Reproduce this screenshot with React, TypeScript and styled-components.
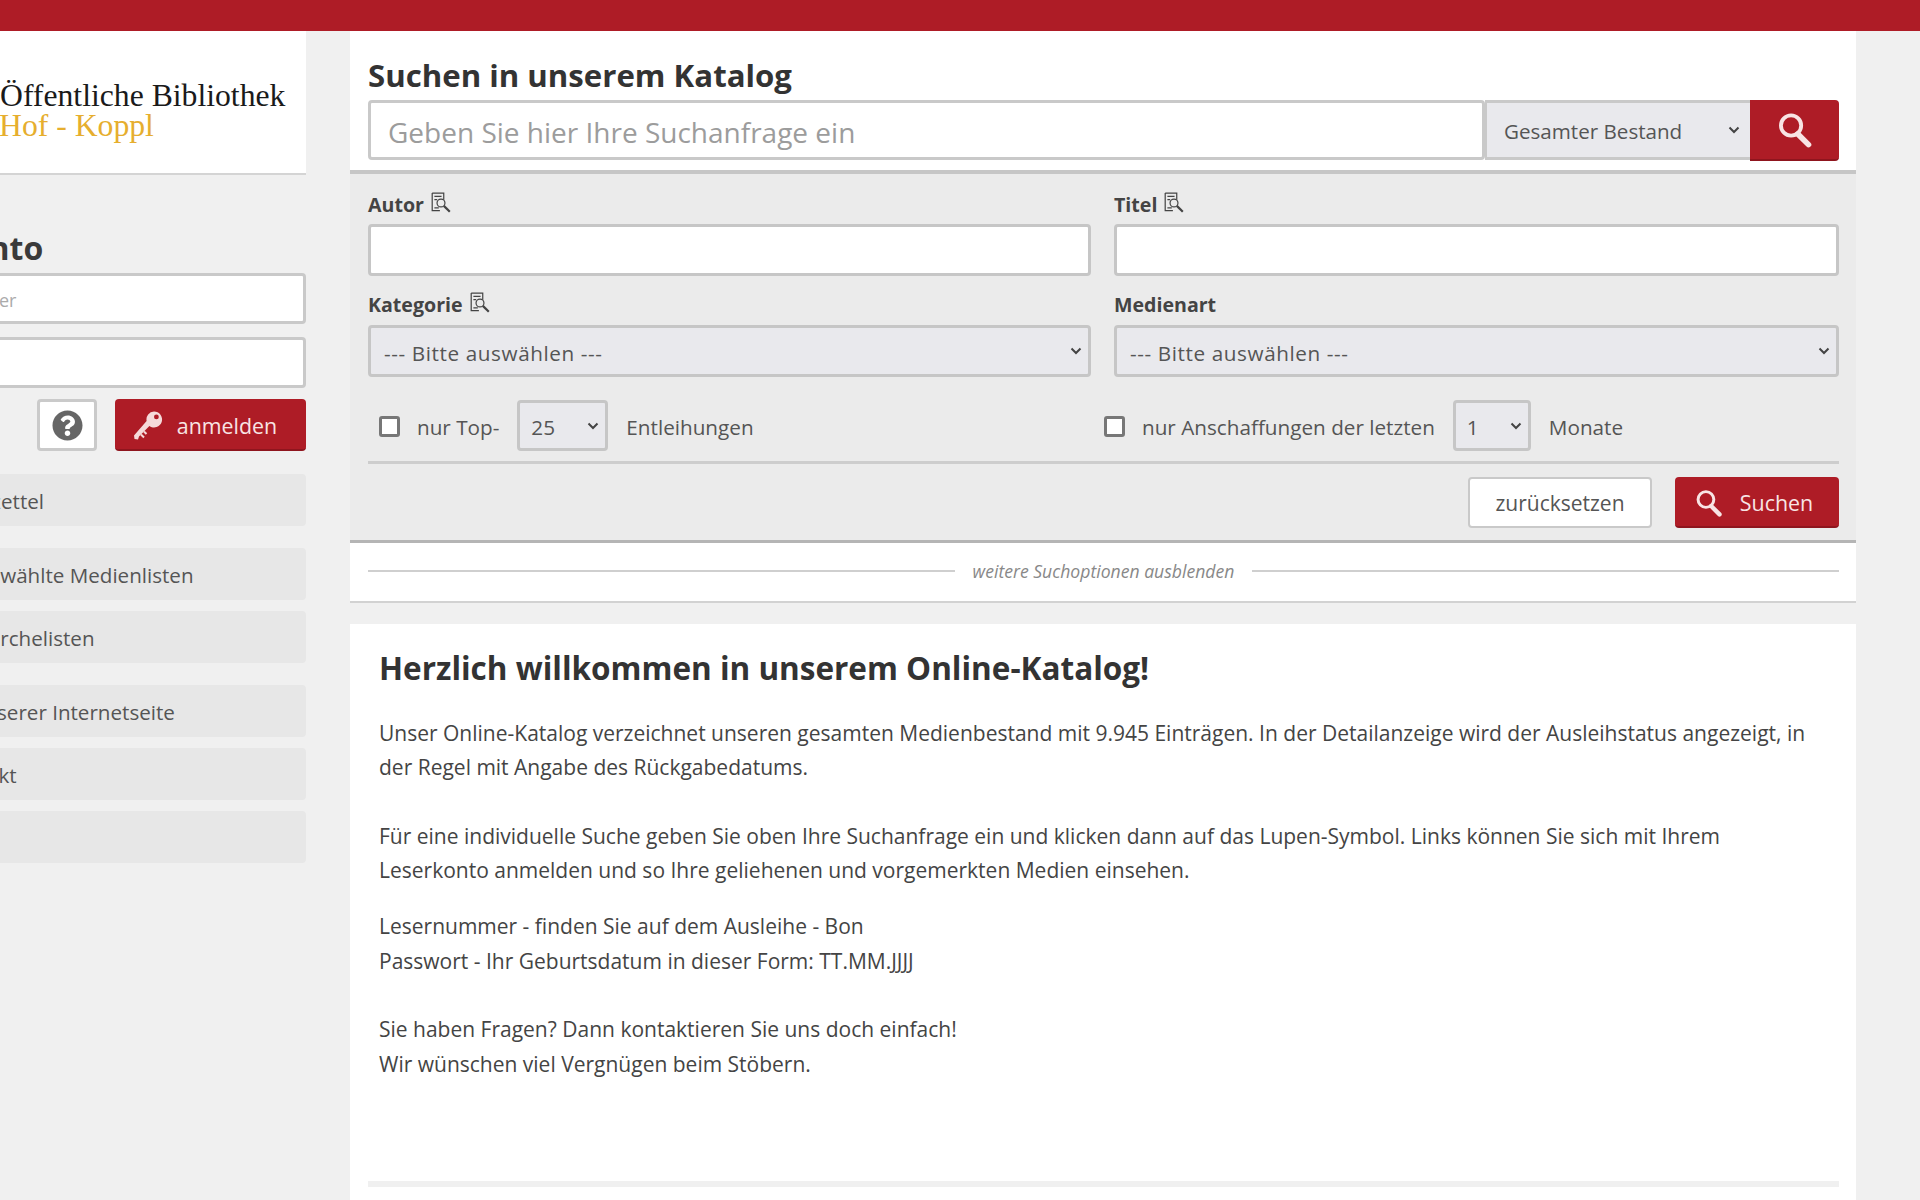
import React from 'react';
import styled, { createGlobalStyle, css } from 'styled-components';
import { FaQuestionCircle } from 'react-icons/fa';

const GlobalStyle = createGlobalStyle`
  html, body {
    margin: 0;
    padding: 0;
    height: 1200px;
    overflow: hidden;
    background: #f0f0f0;
    font-family: "Open Sans", "Liberation Sans", sans-serif;
    color: #444;
  }
  * { box-sizing: border-box; }
`;

const chevron = `url("data:image/svg+xml,%3Csvg xmlns='http://www.w3.org/2000/svg' width='12' height='8' viewBox='0 0 12 8'%3E%3Cpath d='M1.5 1.5 L6 6 L10.5 1.5' fill='none' stroke='%23444' stroke-width='2'/%3E%3C/svg%3E")`;

const selectLook = css`
  appearance: none;
  background-color: #e9e9ed;
  background-image: ${chevron};
  background-repeat: no-repeat;
  background-position: right 6px center;
  color: #555;
  font-family: inherit;
  outline: none;
`;

const TopBar = styled.div`
  height: 31px;
  background: #ae1c26;
`;

/* the screenshot is scrolled sideways, so the shell starts left of the window */
const Shell = styled.div`
  display: grid;
  grid-template-columns: 422px 1506px;
  column-gap: 44px;
  margin-left: -116px;
  width: 1972px;
`;

const Sidebar = styled.aside`
  display: flex;
  flex-direction: column;
`;

const LogoCard = styled.div`
  height: 144px;
  background: #fff;
  border-bottom: 2px solid #d4d4d4;
  padding: 50px 0 0 116px;
  font-family: "Liberation Serif", serif;
  font-size: 31.7px;
  line-height: 30px;
`;

const LogoLine = styled.div<{ $gold?: boolean }>`
  color: ${(p) => (p.$gold ? '#e6ae2e' : '#1a1a1a')};
  margin-left: ${(p) => (p.$gold ? '-1px' : '0')};
  white-space: nowrap;
`;

const SideHeading = styled.h2`
  margin: 53px 0 5px;
  padding-left: 9px;
  font-size: 32px;
  line-height: 40px;
  font-weight: 700;
  color: #3a3a3a;
  white-space: nowrap;
`;

const TextField = styled.input<{ $tall?: boolean }>`
  display: block;
  width: 100%;
  height: ${(p) => (p.$tall ? '60px' : '51px')};
  border: 3px solid #c9c9c9;
  border-radius: 4px;
  background: #fff;
  outline: none;
  font-family: inherit;
  font-size: ${(p) => (p.$tall ? '28px' : '18px')};
  padding: ${(p) => (p.$tall ? '3px 17px 0' : '3px 11px 0')};
  color: #444;
  &::placeholder {
    color: ${(p) => (p.$tall ? '#9c9c9c' : '#ababab')};
    opacity: 1;
  }
`;

const SideFields = styled.div`
  display: flex;
  flex-direction: column;
  gap: 13px;
`;

const LoginRow = styled.div`
  display: flex;
  justify-content: flex-end;
  gap: 18px;
  margin-top: 11px;
`;

const HelpButton = styled.button`
  width: 60px;
  height: 52px;
  border: 3px solid #cacaca;
  border-radius: 4px;
  background: #fff;
  color: #666;
  font-size: 31px;
  display: flex;
  align-items: center;
  justify-content: center;
  padding: 0;
`;

const RedButton = styled.button<{ $w: string; $h: string; $gap: string; $right: string }>`
  width: ${(p) => p.$w};
  height: ${(p) => p.$h};
  display: flex;
  align-items: center;
  justify-content: center;
  gap: ${(p) => p.$gap};
  background: #ae1c26;
  border: none;
  border-bottom: 2px solid #8f151e;
  border-radius: 4px;
  color: #f8e4e4;
  font-family: inherit;
  font-size: 21.4px;
  padding: 2px ${(p) => p.$right} 0 0;
`;

const NavList = styled.nav`
  display: flex;
  flex-direction: column;
  margin-top: 23px;
`;

const NavItem = styled.a<{ $spaced?: boolean }>`
  display: block;
  height: 52px;
  margin-top: ${(p) => (p.$spaced ? '22px' : '11px')};
  padding-left: 58px;
  background: #e7e7e7;
  border-radius: 4px;
  font-size: 20.6px;
  line-height: 54px;
  color: #555;
  white-space: nowrap;
  &:first-child {
    margin-top: 0;
  }
`;

const Main = styled.main`
  display: flex;
  flex-direction: column;
`;

const SearchCard = styled.section`
  height: 139px;
  background: #fff;
  padding: 24px 17px 0 18px;
`;

const MainHeading = styled.h1`
  margin: 0 0 5px;
  font-size: 31.2px;
  line-height: 40px;
  font-weight: 700;
  color: #333;
`;

const SearchRow = styled.div`
  display: grid;
  grid-template-columns: 1fr 265px 89px;
  height: 61px;
`;

const ScopeSelect = styled.select`
  ${selectLook}
  height: 60px;
  border: 3px solid #c9c9c9;
  border-left-width: 2px;
  border-right: none;
  font-size: 20.6px;
  padding: 2px 12px 0 17px;
  background-position: right 10px center;
`;

const SearchButton = styled.button`
  height: 61px;
  background: #ae1c26;
  border: none;
  border-bottom: 2px solid #8f151e;
  border-radius: 0 4px 4px 0;
  display: flex;
  align-items: center;
  justify-content: center;
  padding: 0;
`;

const FilterPanel = styled.section`
  background: #ebebeb;
  border-top: 4px solid #c6c6c6;
  border-bottom: 3px solid #b5b5b5;
  padding: 18px 17px 12px 18px;
`;

const FieldGrid = styled.div`
  display: grid;
  grid-template-columns: 723px 725px;
  column-gap: 23px;
  row-gap: 16px;
`;

const Field = styled.div`
  display: flex;
  flex-direction: column;
`;

const FieldLabel = styled.label`
  display: flex;
  align-items: center;
  gap: 4px;
  height: 24px;
  margin-bottom: 8px;
  font-size: 19.6px;
  font-weight: 700;
  color: #444;
`;

const FilterInput = styled.input`
  height: 52px;
  width: 100%;
  border: 3px solid #c6c6c6;
  border-radius: 4px;
  background: #fff;
  outline: none;
`;

const FilterSelect = styled.select<{ $w?: string }>`
  ${selectLook}
  height: ${(p) => (p.$w ? '51px' : '52px')};
  width: ${(p) => p.$w ?? '100%'};
  border: 3px solid #c6c6c6;
  border-radius: 4px;
  font-size: 20.7px;
  letter-spacing: ${(p) => (p.$w ? '0' : '0.6px')};
  padding: 3px 6px 0 ${(p) => (p.$w ? '11px' : '13px')};
  margin-top: ${(p) => (p.$w ? '0' : '1px')};
`;

const OptionsRow = styled.div`
  display: grid;
  grid-template-columns: 725px 1fr;
  margin-top: 23px;
  height: 51px;
  padding-left: 11px;
`;

const OptionGroup = styled.div<{ $gap: string }>`
  display: flex;
  align-items: center;
  gap: ${(p) => p.$gap};
  font-size: 20.7px;
  line-height: 24px;
  color: #555;
  white-space: nowrap;
`;

const OptionLabel = styled.span`
  padding-top: 2px;
`;

const CheckBox = styled.input.attrs({ type: 'checkbox' })`
  appearance: none;
  width: 21px;
  height: 21px;
  margin: 2px -1px 0 0;
  border: 3px solid #777;
  border-radius: 3px;
  background: #fff;
`;

const Divider = styled.hr`
  margin: 10px 0 0;
  border: none;
  border-top: 3px solid #cdcdcd;
`;

const ActionRow = styled.div`
  display: flex;
  justify-content: flex-end;
  gap: 23px;
  margin-top: 13px;
`;

const ResetButton = styled.button`
  width: 184px;
  height: 51px;
  border: 2px solid #c9c9c9;
  border-radius: 4px;
  background: #fff;
  color: #555;
  font-family: inherit;
  font-size: 21px;
  padding: 0;
`;

const ToggleStrip = styled.div`
  height: 60px;
  background: #fff;
  border-bottom: 2px solid #d2d2d2;
  padding: 0 17px 2px 18px;
  display: flex;
  align-items: center;
  gap: 18px;
`;

const ToggleLine = styled.span`
  flex: 1;
  height: 2px;
  background: #cfcfcf;
`;

const ToggleText = styled.span`
  font-size: 17.6px;
  font-style: italic;
  color: #888;
`;

const WelcomeCard = styled.section`
  margin-top: 21px;
  height: 600px;
  background: #fff;
  padding: 22px 17px 0 18px;
`;

const WelcomeHeading = styled.h2`
  margin: 0 0 26px 11px;
  font-size: 31.5px;
  line-height: 44px;
  font-weight: 700;
  color: #333;
`;

const WelcomeText = styled.p<{ $after?: string }>`
  margin: 0 0 ${(p) => p.$after ?? '0'} 11px;
  max-width: 1440px;
  font-size: 21px;
  line-height: 34.3px;
  color: #444;
`;

const FooterRule = styled.div`
  margin-top: 100px;
  height: 6px;
  background: #f0f0f0;
`;

const SearchGlyph: React.FC<{ size: number }> = ({ size }) => (
  <svg width={size} height={size} viewBox="0 0 32 32" fill="none" stroke="#f8e4e4">
    <circle cx="12.5" cy="12" r="9" strokeWidth="3.4" />
    <path d="M18.5 19.5 L28 29" strokeWidth="5" strokeLinecap="round" />
  </svg>
);

const KeyGlyph: React.FC = () => (
  <svg width="32" height="32" viewBox="0 0 32 32">
    <path
      fill="#f5dada"
      fillRule="evenodd"
      d="M22 2.5a8 8 0 1 1-4.6 14.5L7 27.5l-1 3-3.5-.5L2 26.5 14.6 12A8 8 0 0 1 22 2.5zm2.4 3a2.4 2.4 0 1 0 0 4.8 2.4 2.4 0 0 0 0-4.8z"
    />
    <path stroke="#f5dada" strokeWidth="2" d="M9 25.5l3 3M12 22.5l2.5 2.5" />
  </svg>
);

const CatalogIcon: React.FC = () => (
  <svg width="22" height="22" viewBox="0 0 20 20" fill="none" stroke="#444" strokeWidth="1.1">
    <path d="M2 1 H12.5 V7 M2 1 V17 H9" />
    <path d="M4 4 H10.5 M4 7 H6.5 M4 14.5 H8" />
    <circle cx="10" cy="10" r="3.6" />
    <path d="M12.6 12.6 L18 18" strokeWidth="2" />
  </svg>
);

const LabelIcon = styled.span`
  display: inline-flex;
  margin: -3px 0 0 2px;
`;

const App: React.FC = () => {
  return (
    <>
      <GlobalStyle />
      <TopBar />
      <Shell>
        <Sidebar>
          <LogoCard>
            <LogoLine>Öffentliche Bibliothek</LogoLine>
            <LogoLine $gold>Hof - Koppl</LogoLine>
          </LogoCard>
          <SideHeading>Ihr Konto</SideHeading>
          <SideFields>
            <TextField placeholder="Lesernummer" />
            <TextField type="password" />
          </SideFields>
          <LoginRow>
            <HelpButton aria-label="Hilfe">
              <FaQuestionCircle />
            </HelpButton>
            <RedButton $w="191px" $h="52px" $gap="13px" $right="12px">
              <KeyGlyph />
              anmelden
            </RedButton>
          </LoginRow>
          <NavList>
            <NavItem>Merkzettel</NavItem>
            <NavItem $spaced>Ausgewählte Medienlisten</NavItem>
            <NavItem>Recherchelisten</NavItem>
            <NavItem $spaced>Zu unserer Internetseite</NavItem>
            <NavItem>Kontakt</NavItem>
            <NavItem />
          </NavList>
        </Sidebar>
        <Main>
          <SearchCard>
            <MainHeading>Suchen in unserem Katalog</MainHeading>
            <SearchRow>
              <TextField $tall placeholder="Geben Sie hier Ihre Suchanfrage ein" />
              <ScopeSelect>
                <option>Gesamter Bestand</option>
              </ScopeSelect>
              <SearchButton aria-label="Suchen">
                <SearchGlyph size={36} />
              </SearchButton>
            </SearchRow>
          </SearchCard>
          <FilterPanel>
            <FieldGrid>
              <Field>
                <FieldLabel>
                  Autor
                  <LabelIcon>
                    <CatalogIcon />
                  </LabelIcon>
                </FieldLabel>
                <FilterInput />
              </Field>
              <Field>
                <FieldLabel>
                  Titel
                  <LabelIcon>
                    <CatalogIcon />
                  </LabelIcon>
                </FieldLabel>
                <FilterInput />
              </Field>
              <Field>
                <FieldLabel>
                  Kategorie
                  <LabelIcon>
                    <CatalogIcon />
                  </LabelIcon>
                </FieldLabel>
                <FilterSelect>
                  <option>--- Bitte auswählen ---</option>
                </FilterSelect>
              </Field>
              <Field>
                <FieldLabel>Medienart</FieldLabel>
                <FilterSelect>
                  <option>--- Bitte auswählen ---</option>
                </FilterSelect>
              </Field>
            </FieldGrid>
            <OptionsRow>
              <OptionGroup $gap="18px">
                <CheckBox />
                <OptionLabel>nur Top-</OptionLabel>
                <FilterSelect $w="91px">
                  <option>25</option>
                </FilterSelect>
                <OptionLabel>Entleihungen</OptionLabel>
              </OptionGroup>
              <OptionGroup $gap="18px">
                <CheckBox />
                <OptionLabel>nur Anschaffungen der letzten</OptionLabel>
                <FilterSelect $w="78px">
                  <option>1</option>
                </FilterSelect>
                <OptionLabel>Monate</OptionLabel>
              </OptionGroup>
            </OptionsRow>
            <Divider />
            <ActionRow>
              <ResetButton>zurücksetzen</ResetButton>
              <RedButton $w="164px" $h="51px" $gap="17px" $right="6px">
                <SearchGlyph size={28} />
                Suchen
              </RedButton>
            </ActionRow>
          </FilterPanel>
          <ToggleStrip>
            <ToggleLine />
            <ToggleText>weitere Suchoptionen ausblenden</ToggleText>
            <ToggleLine />
          </ToggleStrip>
          <WelcomeCard>
            <WelcomeHeading>Herzlich willkommen in unserem Online-Katalog!</WelcomeHeading>
            <WelcomeText $after="22px">
              Unser Online-Katalog verzeichnet unseren gesamten Medienbestand mit 9.945 Einträgen. In der Detailanzeige wird der Ausleihstatus angezeigt, in der Regel mit Angabe des Rückgabedatums.
              <br />
              <br />
              Für eine individuelle Suche geben Sie oben Ihre Suchanfrage ein und klicken dann auf das Lupen-Symbol. Links können Sie sich mit Ihrem Leserkonto anmelden und so Ihre geliehenen und vorgemerkten Medien einsehen.
            </WelcomeText>
            <WelcomeText>
              Lesernummer - finden Sie auf dem Ausleihe - Bon
              <br />
              Passwort - Ihr Geburtsdatum in dieser Form: TT.MM.JJJJ
              <br />
              <br />
              Sie haben Fragen? Dann kontaktieren Sie uns doch einfach!
              <br />
              Wir wünschen viel Vergnügen beim Stöbern.
            </WelcomeText>
            <FooterRule />
          </WelcomeCard>
        </Main>
      </Shell>
    </>
  );
};

export default App;
